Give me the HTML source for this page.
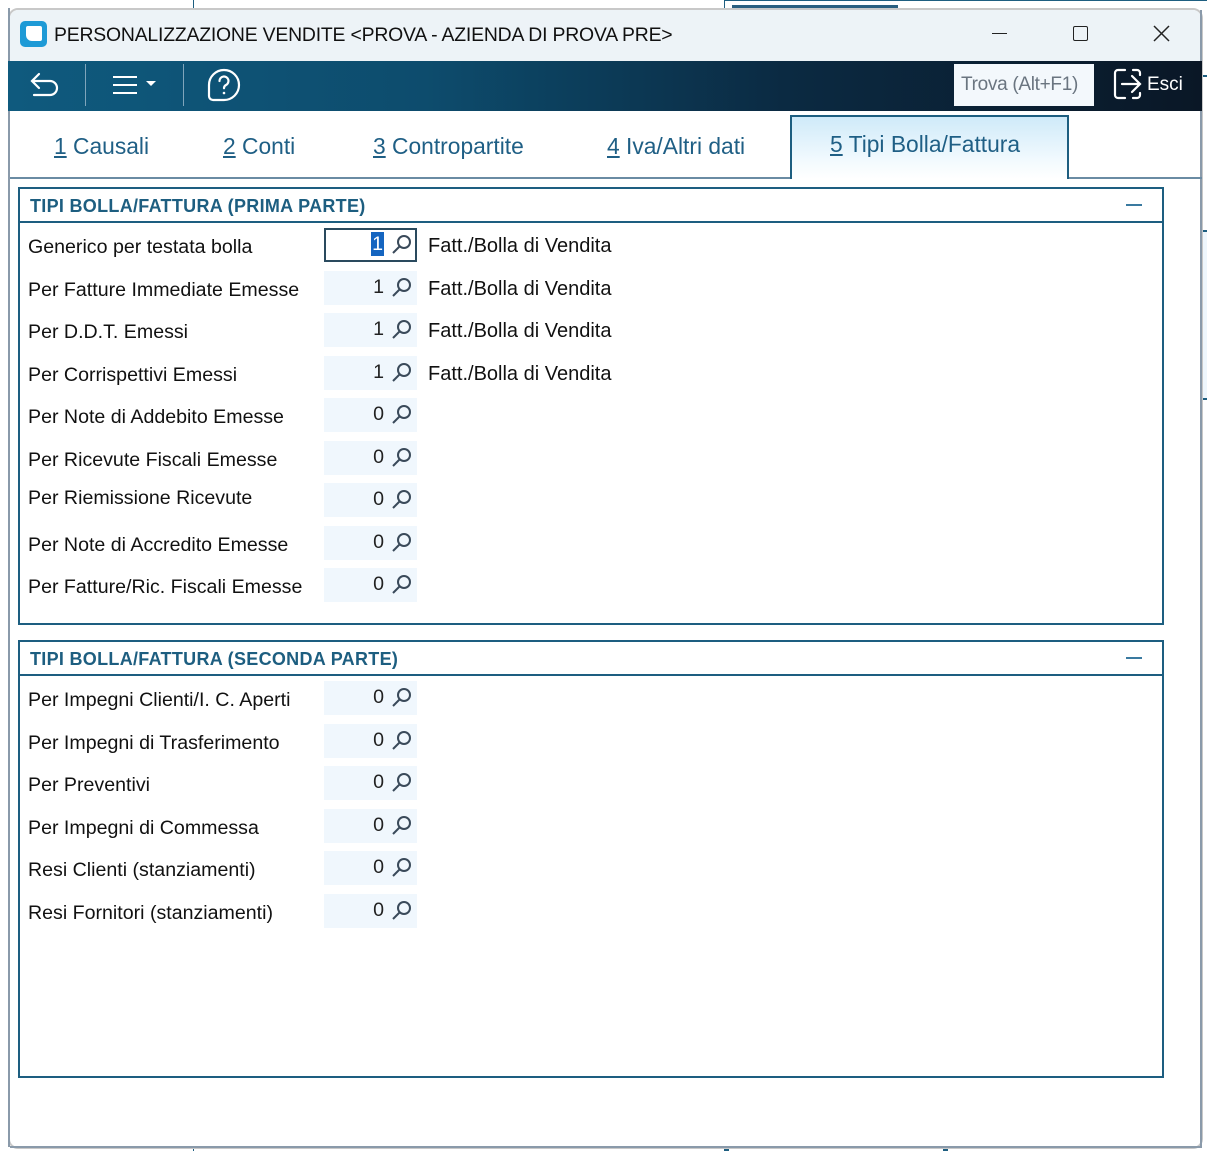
<!DOCTYPE html>
<html><head><meta charset="utf-8"><style>
*{margin:0;padding:0;box-sizing:border-box}
body{width:1207px;height:1151px;background:#fff;position:relative;overflow:hidden;font-family:"Liberation Sans",sans-serif;color:#1a1a1a}
.a{position:absolute}
.lbl{position:absolute;left:28px;font-size:19.6px;line-height:24px;white-space:nowrap;color:#111;margin-top:2px}
.inp{position:absolute;left:324px;width:93px;height:34px;background:#f0f7fd}
.inp span{position:absolute;right:33px;top:4px;font-size:19.6px;line-height:24px;color:#222}
.inp svg{position:absolute;right:4px;top:5px}
.desc{position:absolute;left:428px;font-size:20px;line-height:24px;color:#111;white-space:nowrap;margin-top:1px}
.tab{position:absolute;top:132px;font-size:22.8px;line-height:28px;color:#1f5f85;white-space:nowrap}
.tab u{text-decoration:underline}
.ph{position:absolute;left:18px;width:1146px;border:2px solid #1d5e80;background:#fff}
.ph .h{height:34px;border-bottom:2px solid #1d5e80;font-weight:bold;color:#1d5e80;font-size:18px;line-height:34px;padding-left:10px;letter-spacing:0.3px}
.ph .m{position:absolute;right:20px;top:15px;width:16px;height:2px;background:#3a7aa0}
</style></head><body>
<div class="a" style="left:193px;top:0;width:1px;height:8px;background:#1d5e80"></div>
<div class="a" style="left:724px;top:0;width:483px;height:1px;background:#1d5e80"></div>
<div class="a" style="left:724px;top:0;width:1px;height:8px;background:#1d5e80"></div>
<div class="a" style="left:732px;top:5px;width:166px;height:3px;background:#2a5f80"></div>
<div class="a" style="left:193px;top:1147px;width:1px;height:4px;background:#1d5e80"></div>
<div class="a" style="left:724px;top:1145px;width:5px;height:6px;background:#1d5e80"></div>
<div class="a" style="left:943px;top:1145px;width:5px;height:6px;background:#1d5e80"></div>
<div class="a" style="left:1202px;top:75px;width:5px;height:2px;background:#1d5e80"></div>
<div class="a" style="left:1202px;top:230px;width:5px;height:170px;background:#eef6fc;border-top:2px solid #1d5e80;border-bottom:2px solid #1d5e80"></div>
<div class="a" style="left:8px;top:8px;width:1195px;height:1141px;border:2px solid #c8c8c8;border-radius:10px;background:#fff;overflow:hidden">
 <div class="a" style="left:0;top:0;width:100%;height:51px;background:#edf3f7"></div>
</div>
<div class="a" style="left:8px;top:8px;width:2px;height:1139px;background:#8a9aaa"></div>
<div class="a" style="left:1200px;top:10px;width:2px;height:1137px;background:#8a9aaa"></div>
<div class="a" style="left:10px;top:1146px;width:1192px;height:2px;background:#8a9aaa"></div>
<div class="a" style="left:20px;top:21px;width:27px;height:26px;background:#1e9ad6;border-radius:5px"></div>
<div class="a" style="left:26px;top:26px;width:16px;height:15px;background:#fff;border-radius:2px 2px 2px 6px"></div>
<div class="a" style="left:54px;top:22px;font-size:19.4px;line-height:26px;color:#111;letter-spacing:-0.2px">PERSONALIZZAZIONE VENDITE &lt;PROVA - AZIENDA DI PROVA PRE&gt;</div>
<div class="a" style="left:992px;top:33px;width:15px;height:1px;background:#222"></div>
<div class="a" style="left:1073px;top:26px;width:15px;height:15px;border:1.5px solid #222;border-radius:2px"></div>
<svg class="a" style="left:1153px;top:25px" width="17" height="17"><path d="M1 1L16 16M16 1L1 16" stroke="#222" stroke-width="1.5"/></svg>
<div class="a" style="left:8px;top:61px;width:1194px;height:50px;background:linear-gradient(90deg,#0f5a7e 0%,#0d4c6d 35%,#0b2a42 65%,#0a1726 100%)"></div>
<svg class="a" style="left:28px;top:70px" width="34" height="32" fill="none" stroke="#fff" stroke-width="2.2" stroke-linecap="round"><path d="M11 4L4 11L11 18M4 11H22a7 7 0 0 1 0 14H6"/></svg>
<div class="a" style="left:85px;top:64px;width:1px;height:42px;background:#7fa5bb"></div>
<div class="a" style="left:113px;top:76px;width:24px;height:2px;background:#fff"></div>
<div class="a" style="left:113px;top:84px;width:24px;height:2px;background:#fff"></div>
<div class="a" style="left:113px;top:92px;width:24px;height:2px;background:#fff"></div>
<svg class="a" style="left:146px;top:81px" width="10" height="6"><path d="M0 0H10L5 5Z" fill="#fff"/></svg>
<div class="a" style="left:183px;top:64px;width:1px;height:42px;background:#7fa5bb"></div>
<svg class="a" style="left:207px;top:68px" width="34" height="34" fill="none" stroke="#fff" stroke-width="2.2"><path d="M17 2a15 15 0 1 1 0 30H6a4 4 0 0 1-4-4V17A15 15 0 0 1 17 2Z"/><path d="M12.5 13a4.5 4.5 0 1 1 6.5 4c-1.5.8-2 1.6-2 3.2" stroke-linecap="round"/><circle cx="17" cy="25" r="1.3" fill="#fff" stroke="none"/></svg>
<div class="a" style="left:954px;top:64px;width:140px;height:42px;background:#f3f8fc;font-size:19px;line-height:42px;color:#6a7580;padding-left:7px;letter-spacing:-0.3px">Trova (Alt+F1)</div>
<svg class="a" style="left:1113px;top:68px" width="32" height="33" fill="none" stroke="#fff" stroke-width="2.2" stroke-linecap="round"><path d="M12 2H5a3 3 0 0 0-3 3v22a3 3 0 0 0 3 3h7M9 16H25M19 8L27 16L19 24M20 2h4a3 3 0 0 1 3 3v2M27 25v2a3 3 0 0 1-3 3h-4"/></svg>
<div class="a" style="left:1147px;top:73px;font-size:19px;line-height:24px;color:#fff">Esci</div>
<div class="a" style="left:10px;top:177px;width:1192px;height:2px;background:#6a8ba3"></div>
<div class="a" style="left:790px;top:115px;width:279px;height:64px;border:2px solid #1d5e80;border-bottom:none;background:linear-gradient(180deg,#cfeaf9 0%,#f2fafe 70%,#fff 100%)"></div>
<div class="tab" style="left:54px"><u>1</u> Causali</div>
<div class="tab" style="left:223px"><u>2</u> Conti</div>
<div class="tab" style="left:373px"><u>3</u> Contropartite</div>
<div class="tab" style="left:607px"><u>4</u> Iva/Altri dati</div>
<div class="tab" style="left:830px;top:130px"><u>5</u> Tipi Bolla/Fattura</div>
<div class="ph" style="top:187px;height:438px"><div class="h">TIPI BOLLA/FATTURA (PRIMA PARTE)</div><div class="m"></div></div>
<div class="ph" style="top:640px;height:438px"><div class="h">TIPI BOLLA/FATTURA (SECONDA PARTE)</div><div class="m"></div></div>

<div class="lbl" style="top:233px">Generico per testata bolla</div>
<div class="inp" style="top:228px;background:#fff;border:2px solid #2a4a5e"><span style="right:31px;top:2px;background:#1565c0;color:#fff;padding:0 1px">1</span><svg style="right:2px;top:3px" width="22" height="22" fill="none" stroke="#3a4a5a" stroke-width="2"><circle cx="13" cy="9" r="6"/><path d="M9 13L2 20"/></svg></div>
<div class="desc" style="top:233px">Fatt./Bolla di Vendita</div>

<div class="lbl" style="top:276px">Per Fatture Immediate Emesse</div>
<div class="inp" style="top:271px"><span>1</span><svg width="22" height="22" fill="none" stroke="#3a4a5a" stroke-width="2"><circle cx="13" cy="9" r="6"/><path d="M9 13L2 20"/></svg></div>
<div class="desc" style="top:276px">Fatt./Bolla di Vendita</div>

<div class="lbl" style="top:318px">Per D.D.T. Emessi</div>
<div class="inp" style="top:313px"><span>1</span><svg width="22" height="22" fill="none" stroke="#3a4a5a" stroke-width="2"><circle cx="13" cy="9" r="6"/><path d="M9 13L2 20"/></svg></div>
<div class="desc" style="top:318px">Fatt./Bolla di Vendita</div>

<div class="lbl" style="top:361px">Per Corrispettivi Emessi</div>
<div class="inp" style="top:356px"><span>1</span><svg width="22" height="22" fill="none" stroke="#3a4a5a" stroke-width="2"><circle cx="13" cy="9" r="6"/><path d="M9 13L2 20"/></svg></div>
<div class="desc" style="top:361px">Fatt./Bolla di Vendita</div>

<div class="lbl" style="top:403px">Per Note di Addebito Emesse</div>
<div class="inp" style="top:398px"><span>0</span><svg width="22" height="22" fill="none" stroke="#3a4a5a" stroke-width="2"><circle cx="13" cy="9" r="6"/><path d="M9 13L2 20"/></svg></div>

<div class="lbl" style="top:446px">Per Ricevute Fiscali Emesse</div>
<div class="inp" style="top:441px"><span>0</span><svg width="22" height="22" fill="none" stroke="#3a4a5a" stroke-width="2"><circle cx="13" cy="9" r="6"/><path d="M9 13L2 20"/></svg></div>

<div class="lbl" style="top:484px">Per Riemissione Ricevute</div>
<div class="inp" style="top:483px"><span>0</span><svg width="22" height="22" fill="none" stroke="#3a4a5a" stroke-width="2"><circle cx="13" cy="9" r="6"/><path d="M9 13L2 20"/></svg></div>

<div class="lbl" style="top:531px">Per Note di Accredito Emesse</div>
<div class="inp" style="top:526px"><span>0</span><svg width="22" height="22" fill="none" stroke="#3a4a5a" stroke-width="2"><circle cx="13" cy="9" r="6"/><path d="M9 13L2 20"/></svg></div>

<div class="lbl" style="top:573px">Per Fatture/Ric. Fiscali Emesse</div>
<div class="inp" style="top:568px"><span>0</span><svg width="22" height="22" fill="none" stroke="#3a4a5a" stroke-width="2"><circle cx="13" cy="9" r="6"/><path d="M9 13L2 20"/></svg></div>

<div class="lbl" style="top:686px">Per Impegni Clienti/I. C. Aperti</div>
<div class="inp" style="top:681px"><span>0</span><svg width="22" height="22" fill="none" stroke="#3a4a5a" stroke-width="2"><circle cx="13" cy="9" r="6"/><path d="M9 13L2 20"/></svg></div>

<div class="lbl" style="top:729px">Per Impegni di Trasferimento</div>
<div class="inp" style="top:724px"><span>0</span><svg width="22" height="22" fill="none" stroke="#3a4a5a" stroke-width="2"><circle cx="13" cy="9" r="6"/><path d="M9 13L2 20"/></svg></div>

<div class="lbl" style="top:771px">Per Preventivi</div>
<div class="inp" style="top:766px"><span>0</span><svg width="22" height="22" fill="none" stroke="#3a4a5a" stroke-width="2"><circle cx="13" cy="9" r="6"/><path d="M9 13L2 20"/></svg></div>

<div class="lbl" style="top:814px">Per Impegni di Commessa</div>
<div class="inp" style="top:809px"><span>0</span><svg width="22" height="22" fill="none" stroke="#3a4a5a" stroke-width="2"><circle cx="13" cy="9" r="6"/><path d="M9 13L2 20"/></svg></div>

<div class="lbl" style="top:856px">Resi Clienti (stanziamenti)</div>
<div class="inp" style="top:851px"><span>0</span><svg width="22" height="22" fill="none" stroke="#3a4a5a" stroke-width="2"><circle cx="13" cy="9" r="6"/><path d="M9 13L2 20"/></svg></div>

<div class="lbl" style="top:899px">Resi Fornitori (stanziamenti)</div>
<div class="inp" style="top:894px"><span>0</span><svg width="22" height="22" fill="none" stroke="#3a4a5a" stroke-width="2"><circle cx="13" cy="9" r="6"/><path d="M9 13L2 20"/></svg></div>
</body></html>
